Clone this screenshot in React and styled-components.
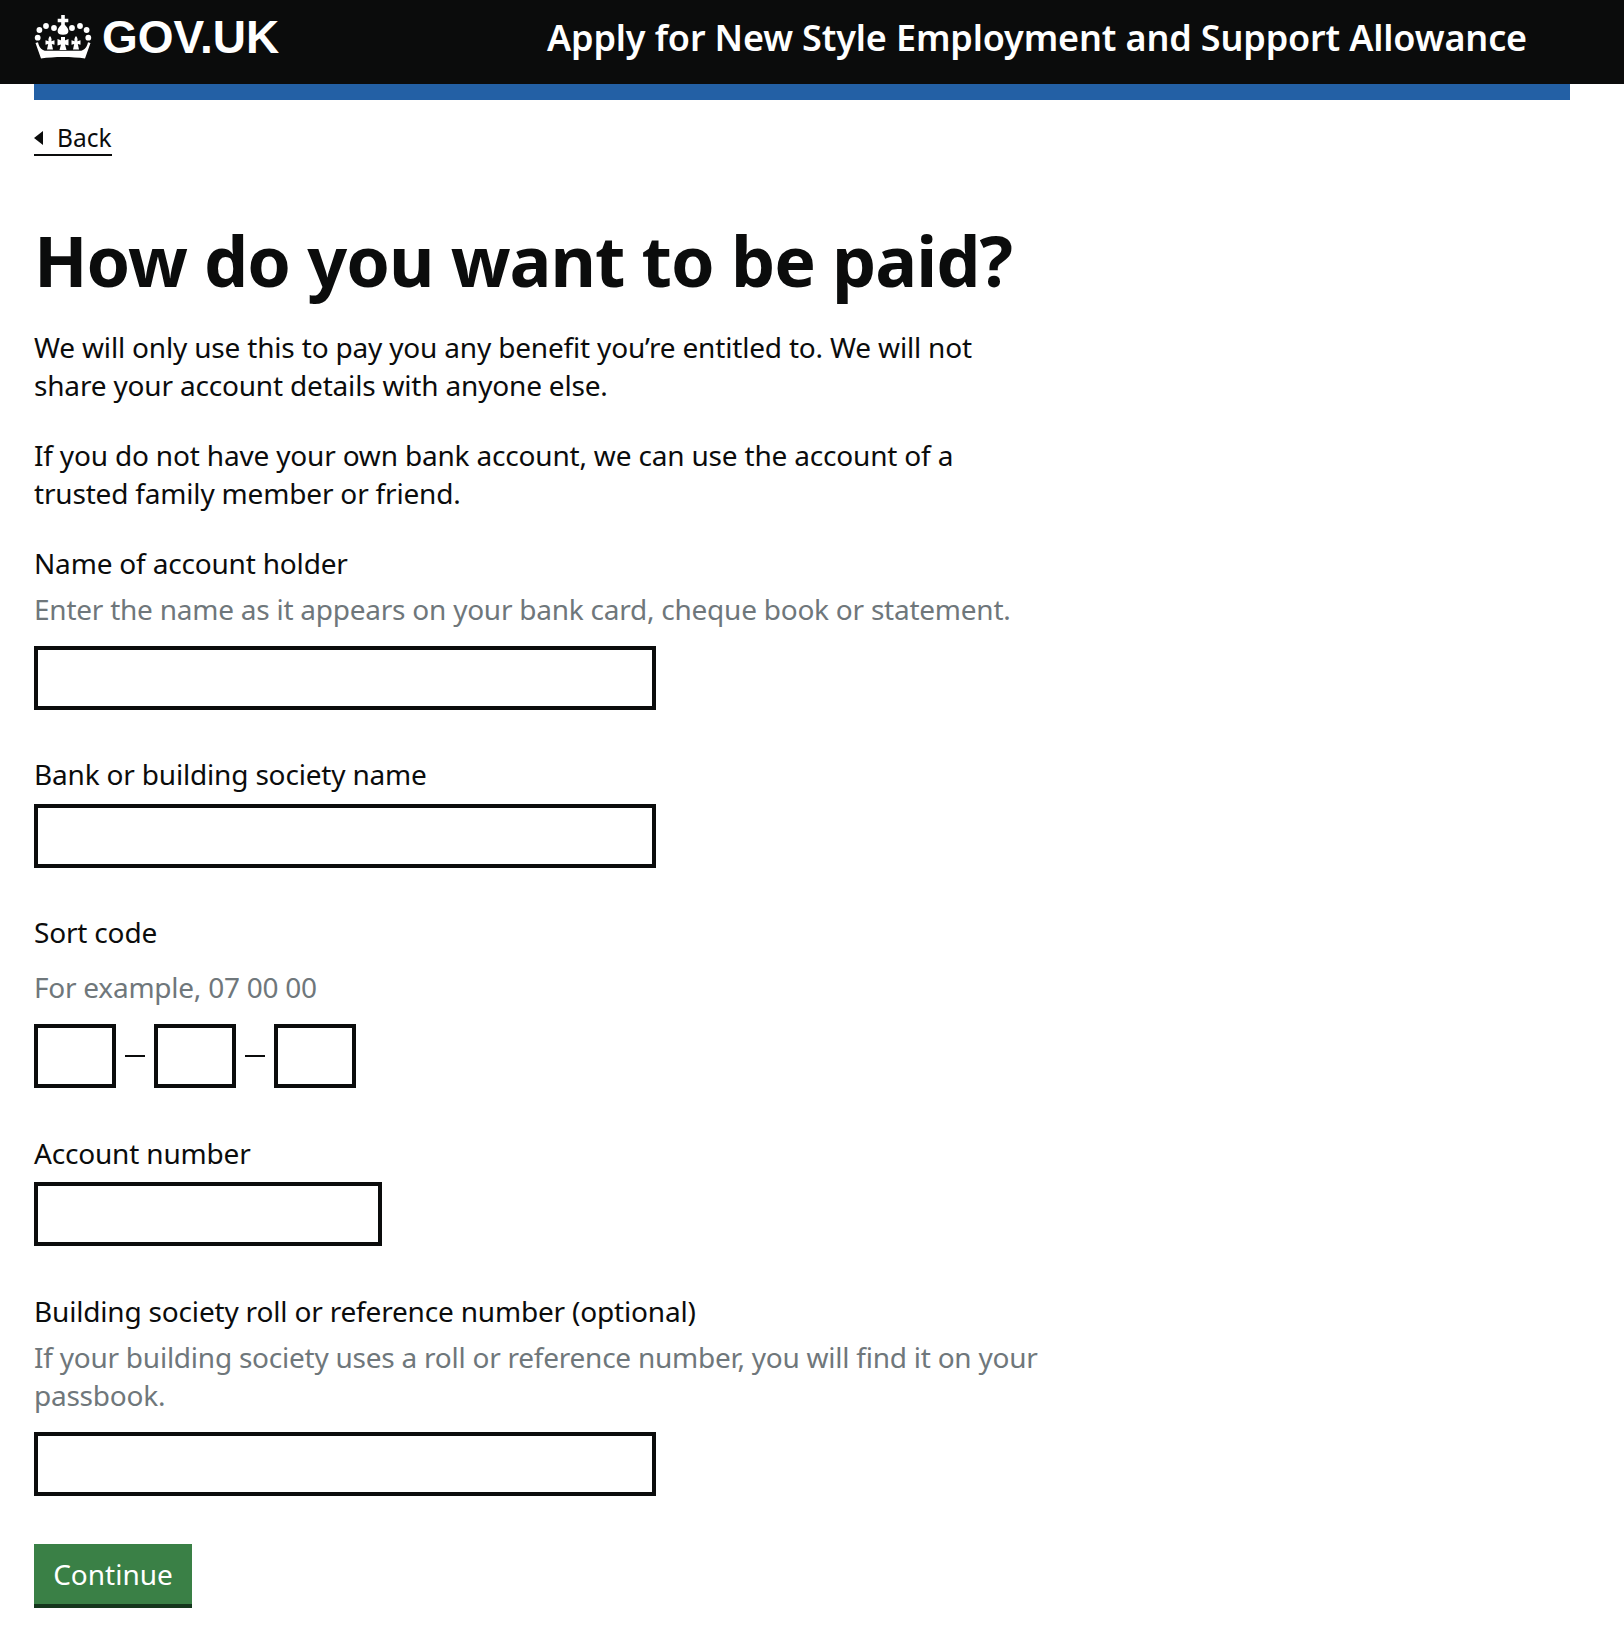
import React from 'react';
import styled, { createGlobalStyle } from 'styled-components';

const GlobalStyle = createGlobalStyle`
  html, body {
    margin: 0;
    padding: 0;
    background: #fff;
  }
  body {
    font-family: "Noto Sans", "Open Sans", sans-serif;
    color: #0b0c0c;
  }
  * { box-sizing: border-box; }
`;

const Header = styled.header`
  height: 84px;
  background: #0b0c0c;
  padding: 0 34px 10px;
  display: flex;
  align-items: center;
  color: #fff;
`;

const Logo = styled.a`
  width: 513px;
  display: flex;
  align-items: center;
  gap: 10px;
  font-family: "Liberation Sans", Arial, sans-serif;
  font-weight: 700;
  font-size: 46px;
  line-height: 1;
`;

const ServiceName = styled.span`
  font-size: 36px;
  font-weight: 600;
  letter-spacing: -0.15px;
  white-space: nowrap;
`;

const Page = styled.main`
  padding: 0 54px 0 34px;
`;

const PhaseBar = styled.div`
  height: 16px;
  background: #2360a5;
`;

const BackLink = styled.a`
  display: inline-flex;
  align-items: center;
  gap: 14px;
  margin-top: 22px;
  height: 34px;
  font-size: 24.5px;
  line-height: 30px;
  border-bottom: 2px solid #0b0c0c;
  &::before {
    content: "";
    border-style: solid;
    border-width: 7px 9px 7px 0;
    border-color: transparent #0b0c0c transparent transparent;
  }
`;

const Title = styled.h1`
  margin: 64px 0 0;
  font-size: 70px;
  line-height: 80px;
  font-weight: 700;
  letter-spacing: -1px;
`;

const Body = styled.p`
  width: 1000px;
  margin: ${(p) => p.$top}px 0 0;
  font-size: 28px;
  line-height: 38px;
  letter-spacing: -0.18px;
`;

const Field = styled.div`
  margin-top: ${(p) => p.$top}px;
`;

const Label = styled.label`
  display: block;
  font-size: 28px;
  line-height: 38px;
  letter-spacing: -0.18px;
`;

const Hint = styled.div`
  width: 1030px;
  margin-top: ${(p) => p.$top || 8}px;
  font-size: 28px;
  line-height: 38px;
  letter-spacing: -0.24px;
  color: #6f777b;
`;

const Input = styled.input`
  display: block;
  width: ${(p) => p.$width}px;
  height: 64px;
  margin-top: ${(p) => p.$top}px;
  border: 4px solid #0b0c0c;
  border-radius: 0;
  background: #fff;
  padding: 6px;
`;

const SortRow = styled.div`
  display: flex;
  align-items: center;
  margin-top: 18px;
`;

const SortInput = styled.input`
  width: 82px;
  height: 64px;
  border: 4px solid #0b0c0c;
  border-radius: 0;
  background: #fff;
`;

const Dash = styled.span`
  width: 20px;
  height: 2px;
  margin: 0 9px;
  background: #0b0c0c;
`;

const Button = styled.button`
  display: block;
  width: 158px;
  height: 64px;
  margin: 48px 0 0;
  border: 0;
  border-bottom: 4px solid #14361c;
  border-radius: 0;
  background: #3a8046;
  color: #fff;
  font-family: inherit;
  font-size: 28px;
  line-height: 1;
  padding: 0;
`;

const Fleur = ({ x }) => (
  <path
    transform={`translate(${x} 0)`}
    d="M0 21c1.500 1.800 2 3.500 1.300 5.300l3.200-1v4.400l-2.700-.8 1.200 5.600H-3l1.200-5.600-2.700.8v-4.400l3.200 1C-2 24.500-1.500 22.800 0 21z"
  />
);

const Crown = () => (
  <svg width="58" height="44" viewBox="0 0 58 44" fill="#fff" aria-hidden="true">
    <circle cx="3.700" cy="22.700" r="2.900" />
    <circle cx="5.400" cy="15" r="2.900" />
    <circle cx="12" cy="11" r="2.900" />
    <circle cx="20" cy="13" r="2.900" />
    <circle cx="38" cy="13" r="2.900" />
    <circle cx="46" cy="11" r="2.900" />
    <circle cx="52.600" cy="15" r="2.900" />
    <circle cx="54.300" cy="22.700" r="2.900" />
    <path d="M27.200 0h3.600v3.700h3.500v3.600h-3.500v2.500c2.300 2.300 3.600 4.300 3.600 6.400 0 2.300-2 3.600-5.400 3.600s-5.400-1.300-5.400-3.600c0-2.100 1.300-4.100 3.600-6.400V7.300h-3.500V3.700h3.500z" />
    <path d="M27 22h4v3.500h-.3l3.800-1.500v6.500L31 29.500l1.500 5.500h-7l1.500-5.500-3.500 1V24l3.800 1.500H27z" />
    <Fleur x={16} />
    <Fleur x={42} />
    <path d="M1.500 28l2.500-.8c.7 3.600 2.300 6.300 5 7.700 1.100.6 2.300.8 3.500.8h33c1.200 0 2.400-.2 3.500-.8 2.700-1.400 4.300-4.100 5-7.700l2.500.8L51 43.500c-6.500-1-14-1.500-22-1.500s-15.500.5-22 1.500z" />
  </svg>
);

export default function App() {
  return (
    <>
      <GlobalStyle />
      <Header>
        <Logo>
          <Crown />
          GOV.UK
        </Logo>
        <ServiceName>Apply for New Style Employment and Support Allowance</ServiceName>
      </Header>
      <Page>
        <PhaseBar />
        <BackLink>Back</BackLink>
        <Title>How do you want to be paid?</Title>
        <Body $top={28}>
          We will only use this to pay you any benefit you’re entitled to. We will not share your
          account details with anyone else.
        </Body>
        <Body $top={32}>
          If you do not have your own bank account, we can use the account of a trusted family
          member or friend.
        </Body>
        <Field $top={32}>
          <Label>Name of account holder</Label>
          <Hint>Enter the name as it appears on your bank card, cheque book or statement.</Hint>
          <Input $width={622} $top={18} />
        </Field>
        <Field $top={45}>
          <Label>Bank or building society name</Label>
          <Input $width={622} $top={11} />
        </Field>
        <Field $top={45}>
          <Label>Sort code</Label>
          <Hint $top={17}>For example, 07 00 00</Hint>
          <SortRow>
            <SortInput />
            <Dash />
            <SortInput />
            <Dash />
            <SortInput />
          </SortRow>
        </Field>
        <Field $top={46}>
          <Label>Account number</Label>
          <Input $width={348} $top={10} />
        </Field>
        <Field $top={46}>
          <Label>Building society roll or reference number (optional)</Label>
          <Hint>If your building society uses a roll or reference number, you will find it on your passbook.</Hint>
          <Input $width={622} $top={18} />
        </Field>
        <Button>Continue</Button>
      </Page>
    </>
  );
}
